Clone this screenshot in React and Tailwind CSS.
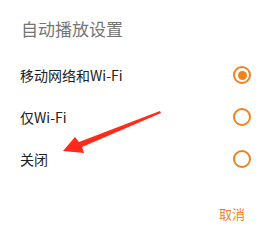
import React from "react";

function Radio({ checked }) {
  return (
    <span className="flex h-[18px] w-[18px] items-center justify-center rounded-full border-2 border-[#f0821e]">
      {checked && <span className="h-[9px] w-[9px] rounded-full bg-[#f0821e]" />}
    </span>
  );
}

export default function App() {
  const items = [
    { label: "移动网络和Wi-Fi", checked: true },
    { label: "仅Wi-Fi", checked: false },
    { label: "关闭", checked: false },
  ];
  return (
    <div
      className="relative h-[233px] w-[270px] overflow-hidden bg-white"
      style={{ fontFamily: '"Noto Sans CJK SC", "Noto Sans", sans-serif' }}
    >
      <div className="h-[54px] pl-[21px] pt-[17px] text-[17px] leading-[24px] text-[#757575]">
        自动播放设置
      </div>
      {items.map((it) => (
        <div
          key={it.label}
          className="flex h-[42px] items-center justify-between pl-[20px] pr-[19px] text-[14px] text-[#212121]"
        >
          <span>{it.label}</span>
          <Radio checked={it.checked} />
        </div>
      ))}
      <div className="mt-[20px] flex h-[28px] items-center justify-end pr-[25px] text-[13px] text-[#f0821e]">
        取消
      </div>
      <svg
        className="pointer-events-none absolute left-0 top-0"
        width="270"
        height="233"
        viewBox="0 0 270 233"
      >
        <polygon
          points="63,151 75,137 79,142 160,111 161,113 82,147 84,153"
          fill="#ff2a1a"
        />
      </svg>
    </div>
  );
}
